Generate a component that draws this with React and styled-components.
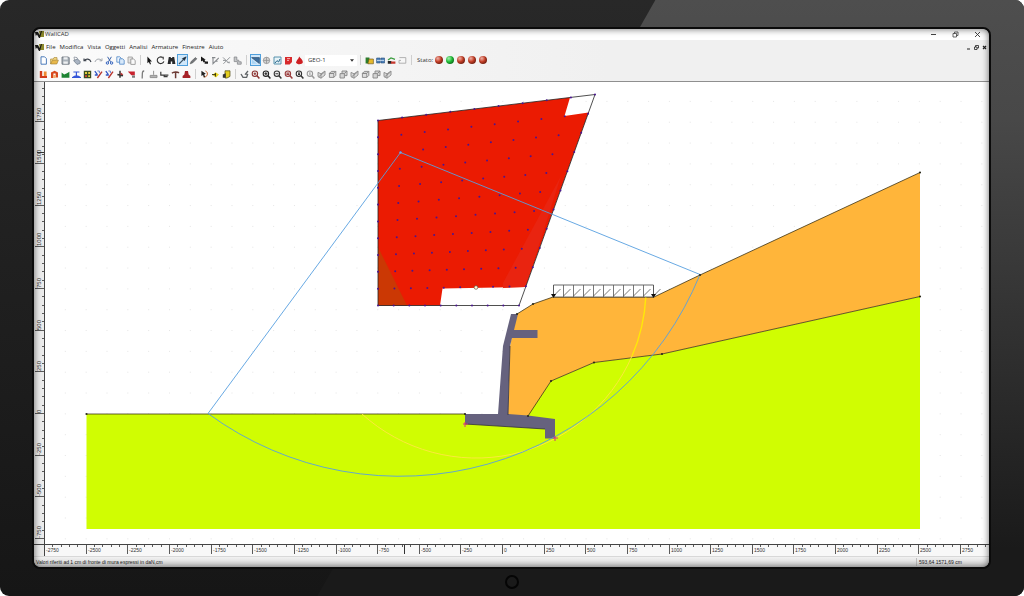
import React, { useState } from 'react';
import styled, { createGlobalStyle } from 'styled-components';

// pixels per cm of the sheet, and where the world origin falls on it
const SCALE_X = 0.1665;
const SCALE_Y = 0.1668;
const ORIGIN = { x: 458, y: 331 };

const icons = {
  page: <path d="M2 .8h3.6L7.4 2.6v5.6H2z" fill="#fff" stroke="#3c6fb4" strokeWidth=".9" />,
  open: (
    <>
      <path d="M.6 8V3h2.6l.8-1.4h3V4" fill="#f5d983" stroke="#a98a3e" strokeWidth=".7" />
      <path d="M.6 8l1.8-3.8h6L6.8 8z" fill="#e8b84a" stroke="#9a7a30" strokeWidth=".6" />
    </>
  ),
  save: (
    <>
      <path d="M1 1h6.4l.8.8v6.4H1z" fill="#aab2ba" stroke="#626a74" strokeWidth=".8" />
      <path d="M2.6 1.2h4v2.4h-4zM2.4 5.4h4.4v2.4H2.4z" fill="#eef0f2" />
    </>
  ),
  print: (
    <>
      <path d="M2 1l3 .6 1 2.6-3.4.2z" fill="#fff" stroke="#7f8894" strokeWidth=".7" />
      <path d="M1.6 4.6L5.4 3l3 2.6-.6 2L5 8.4z" fill="#a9b4c2" stroke="#6d7886" strokeWidth=".7" />
    </>
  ),
  undo: <path d="M1 2.4v2.4h2.4M1.2 4.6C3 2.4 7 2.4 8 6" fill="none" stroke="#3b414b" strokeWidth="1.1" />,
  redo: <path d="M8 2.4v2.4H5.6M7.8 4.6C6 2.4 2 2.4 1 6" fill="none" stroke="#a3a8ae" strokeWidth="1" />,
  cut: (
    <>
      <path d="M2.6.8l3 5M6.4.8l-3 5" stroke="#3a62a8" strokeWidth="1" />
      <path d="M1.2 7a1.2 1.2 0 102.4 0 1.2 1.2 0 10-2.4 0M5.4 7a1.2 1.2 0 102.4 0 1.2 1.2 0 10-2.4 0" fill="none" stroke="#2f5fbd" strokeWidth="1" />
    </>
  ),
  copy: (
    <>
      <path d="M.8.8h3l1.4 1.4v4H.8z" fill="#eef5fd" stroke="#4f86c6" strokeWidth=".8" />
      <path d="M3.6 2.8h3l1.6 1.4v4H3.6z" fill="#d8e9fa" stroke="#4f86c6" strokeWidth=".8" />
    </>
  ),
  paste: (
    <>
      <path d="M1 1h4.4v6H1z" fill="#e3e3e3" stroke="#9b9b9b" strokeWidth=".8" />
      <path d="M3.8 3h2.8l1.6 1.4v4H3.8z" fill="#fafafa" stroke="#8e8e8e" strokeWidth=".8" />
    </>
  ),
  cursor: <path d="M2.4.6v6.6l1.5-1.3L5 8.4l1-.5L5 5.5h2z" fill="#151515" />,
  rotate: <path d="M6.6 1.4A3.4 3.4 0 107.9 5.4M4.6 1.2h2.6v2.4" fill="none" stroke="#333" strokeWidth="1.1" />,
  binocular: <path d="M1.8 1h2v1h1.4V1h2l1.2 7H5.2V5.4H3.8V8H.6z" fill="#27282a" />,
  pick: (
    <>
      <path d="M1 8l4.6-4.6" stroke="#3d5366" strokeWidth="1.2" />
      <path d="M4.4 2.6L8.2.8 6.4 4.6z" fill="#1c2c3a" stroke="#1c2c3a" strokeWidth=".6" />
    </>
  ),
  brush: <path d="M1.2 7.8l1-2.4L6.4 1.6l1.4 1.2-4 4z" fill="#74777a" stroke="#4f5254" strokeWidth=".6" />,
  move: <path d="M1 .6v5l1.4-1 1.2 1.8 1-.6v2H8V5.4H5.4l-1-1.6h1.4z" fill="#1b1b1b" />,
  greyPen: <path d="M1 1.6h3.4M2 1.6v6L7.8 1.8M4.4 5.2h2.2" fill="none" stroke="#85888c" strokeWidth="1.1" />,
  greyCross: <path d="M1 1.4l6 6M1.4 7.8L8 1.2M1 4.4h3M5.4 6.4l2.6-.2" fill="none" stroke="#929599" strokeWidth="1" />,
  greyHand: <path d="M1.2 1h2.6v3.2h2v1.6h2.4v2.4H4.4V5.6H1.2z" fill="#c6c8ca" stroke="#85888c" strokeWidth=".8" />,
  wedge: (
    <>
      <path d="M.6 1.6h7.8v6z" fill="#3d6d9c" stroke="#203e5e" strokeWidth=".6" />
      <path d="M1 3.4l5 4.4H1z" fill="#a8d3f3" />
    </>
  ),
  globe: <path d="M4.5 1.2a3.2 3.2 0 100 6.4 3.2 3.2 0 100-6.4M1.4 4.4h6.2M4.5 1.2v6.4" fill="#d5d5d5" stroke="#929292" strokeWidth=".8" />,
  image: (
    <>
      <path d="M1 1h7v7H1z" fill="#e6f3f7" stroke="#4788a5" strokeWidth=".9" />
      <path d="M2 7l2-2.4L5.6 6 7 3" fill="none" stroke="#266488" strokeWidth="1" />
    </>
  ),
  shield: (
    <>
      <path d="M1 1h7v5L5.6 8.4H1z" fill="#d72a2c" />
      <path d="M3 2.6h3M3 4.4h2" stroke="#ffd6d2" strokeWidth=".8" />
    </>
  ),
  drop: <path d="M4.2.6C5 2 8.2 4 7.8 6.6 7 8.8 1.6 8.6 1 6.4 1.4 4.4 3.6 3 4.2.6z" fill="#ce1f23" />,
  layers: (
    <>
      <path d="M.6 1.4h3.8v6H.6z" fill="#2d7d2c" />
      <path d="M4 3h4.4v4.8H2.8z" fill="#e5b92c" stroke="#614c14" strokeWidth=".6" />
    </>
  ),
  book: (
    <>
      <path d="M.6 2h3.6v5H.6zM5 2h3.6v5H5z" fill="#4c7fb9" stroke="#28507e" strokeWidth=".6" />
      <path d="M1 4.4h7" stroke="#cfe3f5" strokeWidth=".9" />
    </>
  ),
  chart: (
    <>
      <path d="M.8 5h3.6v2.8H.8z" fill="#262626" />
      <path d="M4 5.4h4.4v2.4H4z" fill="#c6362d" />
      <path d="M1 4l3-2 4 1.4" fill="none" stroke="#3a9c3d" strokeWidth="1.2" />
    </>
  ),
  note: <path d="M1.4 1.6h6.4v5.6H1V4.4h2" fill="#f7f7f7" stroke="#a9a9a9" strokeWidth=".9" />,
  tower: (
    <>
      <path d="M.8 1h2.4v5H8V8H.8z" fill="#d23c1c" />
      <path d="M4.8 1.4h2.8V6H4.8z" fill="#ee8a33" />
    </>
  ),
  towerRound: (
    <>
      <path d="M1 2.4L4.6.8 8 2.6v5H5.6V3.6H3.4V8H1z" fill="#d8491e" />
      <path d="M3.4 5h2.2v3H3.4z" fill="#f2b06c" />
    </>
  ),
  hill: <path d="M.6 2.6l2.6 2L6 3.2l2.4-1.4v6H.6z" fill="#1d8433" />,
  bridge: <path d="M1.4 2h6M4.4 2v4M.6 7.4c2.4-1.8 5.4-1.8 7.8 0z" fill="#3556d8" stroke="#3556d8" strokeWidth="1.2" />,
  grid: (
    <>
      <path d="M.8.8h7.4v7.4H.8z" fill="#3b4d20" />
      <path d="M2 2h2v2H2zM5.2 2h1.8v2H5.2zM5.2 5.2h1.8v1.8H5.2z" fill="#e0ce3e" />
      <path d="M2 5.2h2v1.8H2z" fill="#d34635" />
    </>
  ),
  redBlue: (
    <>
      <path d="M.8 1.2l2.6 3.4M.8 5h3" stroke="#3154c4" strokeWidth="1.3" />
      <path d="M3.4 8L8 1.6" stroke="#b9362f" strokeWidth="1.4" />
      <path d="M3.4 1h2v2" fill="none" stroke="#5a77cc" strokeWidth=".9" />
    </>
  ),
  figure: (
    <>
      <path d="M4 .8v7M1.4 4.4L7 5.8" stroke="#353535" strokeWidth="1.5" />
      <path d="M4.4 2.2l3 2.2-2.6.8z" fill="#b32d2d" />
    </>
  ),
  flag: (
    <>
      <path d="M.8 1.4h7v3.8H4.4z" fill="#c8232f" />
      <path d="M5 5.6h3v2.2H5z" fill="#7b7b7b" />
    </>
  ),
  hook: <path d="M6.2 1C4 1 4.4 2.6 4.2 8.4" fill="none" stroke="#7c7c7c" strokeWidth="1.3" />,
  stamp: <path d="M4.6.8v4M1.2 5.4h6.8v2.2H1.2z" fill="#b4b4b4" stroke="#8a8a8a" strokeWidth=".9" />,
  bar: <path d="M.8 1.8v3.4h7.6M4.2 5v1.6h3.4" fill="none" stroke="#3a3a3a" strokeWidth="1.2" />,
  tee: <path d="M1 3.2C2.4 1.6 6.4 1.6 8 2.8M4.6 2.2v6" fill="none" stroke="#6d3b35" strokeWidth="1.5" />,
  bell: <path d="M3 1h3l.6 3.6L8.4 6v2H.6V6l1.8-1.4z" fill="#a52127" />,
  target: (
    <>
      <path d="M5.4 1a3 3 0 11-2 5.8" fill="none" stroke="#c5642e" strokeWidth="1" />
      <path d="M1.4.8l4.4 3-1.6.6 1 2.6-1.2.4-1-2.4L1.4 6z" fill="#222" />
    </>
  ),
  spark: (
    <>
      <path d="M4.4 2.2L8 4.6 5 7.4 1.6 5z" fill="#e9d723" />
      <path d="M1 4.6h4M4.4 3v3.6" stroke="#3b3910" strokeWidth="1" />
    </>
  ),
  lamp: (
    <>
      <path d="M3 .8h5v5.6L5 8H3z" fill="#e3cd1e" stroke="#4f4710" strokeWidth=".7" />
      <path d="M.8 4.6l3-1.4v4.6h-3z" fill="#343434" />
    </>
  ),
  sketch: <path d="M8 1L5 4.6M1 4l2 3.4h3.6l1-3-2.4-.6" fill="none" stroke="#5f6366" strokeWidth="1.3" />,
  cubeA: <path d="M1.4 3.4l2-2h4.4l-2 2zM1.4 3.4h4.4v4H1.4zM5.8 7.4l2-2v-4" fill="#dedede" stroke="#858585" strokeWidth=".9" />,
  cubeB: <path d="M1 2.4l3 1.4L8 1v4L4 8.2 1 6.6zM4 3.8v4.4M1.6 6.8L7.6 2" fill="#dcdcdc" stroke="#8b8b8b" strokeWidth=".9" />,
  cubeC: <path d="M3 1h5v4.6H5.4V8H1V3.6h2zM3 3.6h2.4v2M5.4 3.6L8 1" fill="#d4d4d4" stroke="#868686" strokeWidth=".9" />,
};

function lens(color, mark) {
  return (
    <>
      <circle cx="3.9" cy="3.7" r="2.7" fill="#f4f4f4" stroke={color} strokeWidth="1.1" />
      <path d="M6 5.8l2.4 2.6" stroke={color} strokeWidth="1.5" />
      <path d={mark} stroke={color} strokeWidth="1.1" />
    </>
  );
}
icons.zoomArea = lens('#8c3432', 'M2.6 3.7h2.6M3.9 2.4v2.6');
icons.zoomIn = lens('#242424', 'M2.4 3.7h3M3.9 2.2v3');
icons.zoomOut = lens('#353535', 'M2.4 3.7h3');
icons.zoomAll = lens('#9a3c3c', 'M2.4 3h3M2.4 4.4h3');
icons.zoomBack = lens('#333', 'M3 3h2M3 4.4h2');
icons.zoomGrey = lens('#999', 'M3.9 2.2v3');

const fileTools = [
  ['page', 'Nuovo'], ['open', 'Apri'], ['save', 'Salva'], ['print', 'Stampa'], ['undo', 'Annulla'],
  ['redo', 'Ripeti'], ['cut', 'Taglia'], ['copy', 'Copia'], ['paste', 'Incolla'],
];
const editTools = [
  ['cursor', 'Seleziona'], ['rotate', 'Ruota'], ['binocular', 'Trova'], ['pick', 'Preleva'], ['brush', 'Pennello'],
  ['move', 'Sposta'], ['greyPen', 'Modifica punto'], ['greyCross', 'Elimina punto'], ['greyHand', 'Trascina'],
];
const viewTools = [
  ['wedge', 'Cuneo'], ['globe', 'Globale'], ['image', 'Immagine'], ['shield', 'Verifica'], ['drop', 'Falda'],
];
const reportTools = [['layers', 'Strati'], ['book', 'Relazione'], ['chart', 'Diagramma'], ['note', 'Nota']];
const objectTools = [
  ['tower', 'Muro'], ['towerRound', 'Muro a gravità'], ['hill', 'Terreno'], ['bridge', 'Acqua'], ['grid', 'Materiali'],
  ['redBlue', 'Carico'], ['redBlue', 'Carico lineare'], ['figure', 'Forza'], ['flag', 'Sisma'], ['hook', 'Gancio'],
  ['stamp', 'Base'], ['bar', 'Barra'], ['tee', 'Tirante'], ['bell', 'Palo'],
];
const calcTools = [['target', 'Calcola'], ['spark', 'Combinazioni'], ['lamp', 'Opzioni']];
const zoomTools = [
  ['sketch', 'Disegno'], ['zoomArea', 'Zoom area'], ['zoomIn', 'Ingrandisci'], ['zoomOut', 'Riduci'],
  ['zoomAll', 'Zoom tutto'], ['zoomBack', 'Zoom precedente'], ['zoomGrey', 'Zoom fisso'], ['cubeB', 'Vista 1'],
  ['cubeA', 'Vista 2'], ['cubeC', 'Vista 3'], ['cubeB', 'Vista 4'], ['cubeA', 'Vista 5'], ['cubeC', 'Vista 6'],
  ['cubeB', 'Vista 7'],
];
const menus = ['File', 'Modifica', 'Vista', 'Oggetti', 'Analisi', 'Armature', 'Finestre', 'Aiuto'];
const lights = ['#cc3f26', '#22c83a', '#cc3f26', '#cc3f26', '#cc3f26'];

function AppIcon() {
  return (
    <svg width="9" height="9" viewBox="0 0 9 9" aria-hidden="true">
      <path d="M4 1h5v6H5z" fill="#8d8a2c" />
      <path d="M0 2h3l1.6 3L6 1h1L5 8H4L2 4.6.8 6z" fill="#1a1a18" />
    </svg>
  );
}

function Tools({ items, active }) {
  return items.map(([icon, label], i) => (
    <Tool key={i} type="button" title={label} aria-label={label} $on={icon === active}>
      <svg width="9" height="9" viewBox="0 0 9 9" fill="none">{icons[icon]}</svg>
    </Tool>
  ));
}

function range(from, to, step) {
  const out = [];
  for (let v = from; v <= to; v += step) out.push(v);
  return out;
}

function LeftRuler() {
  return (
    <RulerSvg $side="left">
      <path d="M10.5 0v2000" stroke="#444" />
      {range(-6000, 1950, 50).map(v => {
        const y = Math.round(ORIGIN.y - v * SCALE_Y) + 0.5;
        return <path key={v} d={`M${v % 250 ? 8 : 1} ${y}H10`} stroke="#5a5a5a" />;
      })}
      {range(-750, 1750, 250).map(v => (
        <text key={v} transform={`translate(7 ${Math.round(ORIGIN.y - v * SCALE_Y)}) rotate(-90)`}>{v}</text>
      ))}
      <path d="M3 70.5h7" stroke="#333" />
    </RulerSvg>
  );
}

function BottomRuler() {
  return (
    <RulerSvg>
      <path d="M0 .5h4000" stroke="#444" />
      {range(-2750, 15000, 50).map(v => {
        const x = Math.round(ORIGIN.x + v * SCALE_X) - 0.5;
        return <path key={v} d={`M${x} 1v${v % 250 ? 2 : 9}`} stroke="#5a5a5a" />;
      })}
      {range(-2750, 2750, 250).map(v => (
        <text key={v} x={Math.round(ORIGIN.x + v * SCALE_X) + 1} y="8">{v}</text>
      ))}
      <path d="M359.5 1v9" stroke="#333" />
    </RulerSvg>
  );
}

// nodes of the mesh of centres, 9 x 11 cells between the four corners
function meshNodes() {
  const nodes = [];
  for (let r = 0; r <= 11; r++) {
    for (let c = 0; c <= 9; c++) {
      const u = c / 9;
      const v = r / 11;
      const right = { x: 595 - 76 * v, y: 94.5 + 211 * v };
      const leftY = 120.5 + 185 * v;
      nodes.push([378 + (right.x - 378) * u, leftY + (right.y - leftY) * u]);
    }
  }
  return nodes;
}

const soilNodes = [
  [86.5, 414], [465, 414], [528, 416], [551, 381], [594, 362.5], [662, 354], [920, 296.5],
  [920, 172.5], [700, 275], [533, 304], [517, 314],
];

function Drawing() {
  return (
    <Sheet role="img" aria-label="Sezione del muro con superfici di scorrimento">
      <defs>
        <pattern id="dots" width="20.83" height="20.83" patternUnits="userSpaceOnUse" x="0" y="8">
          <path d="M20 11h1v1h-1z" fill="#e0e0e0" />
        </pattern>
      </defs>
      <rect width="100%" height="100%" fill="url(#dots)" />
      <g transform="translate(-45 -82)">
        <path d="M86.5 414H528l23-33 43-18.5 68-8.5 258-57.5V529H86.5z" fill="#d0fd02" />
        <path d="M517 314l16-10 20-7h101l46-22 220-102.5v124L662 354l-68 8.5L551 381l-23 35-20-1 2-69z" fill="#ffb53a" />
        <path d="M86.5 414H465M517 314l16-10 20-7h101l46-22 220-102.5M528 416l23-35 43-18.5 68-8.5 258-57.5" fill="none" stroke="#3d3518" strokeWidth=".8" />
        <path d="M511 314h7l-4 16h23.5v8H512l-2 8-2 68 20 1.5 27 3.5v19.5h-10V429l-80-5v-10h33l5-68z" fill="#66627e" />
        <path d="M465 424l80 5M510 346l-2 69" fill="none" stroke="#34313e" strokeWidth=".8" />

        {/* trial surfaces */}
        <path d="M645.8 297A170 170 0 01632 356" fill="none" stroke="#ffe808" strokeWidth="1.4" />
        <path d="M632 356A170 170 0 01362 414" fill="none" stroke="#fbe93c" strokeWidth="1" />

        <path d="M378 120.5L570 97.5l-5.5 18.5 24-3.5-63 174.5-83 1.5-2.5 17H378z" fill="#eb1b02" />
        <path d="M561 176l-58 107v5l22.5-1z" fill="#e92410" />
        <path d="M378 247l29 58.5h-29z" fill="#cb3804" />
        <path d="M378 120.5L595 94.5 519 305.5H378z" fill="none" stroke="#222" strokeWidth=".8" />
        {meshNodes().map(([x, y], i) => (
          <circle key={i} cx={x} cy={y} r="1" fill="#4a1590" />
        ))}
        <circle cx="476" cy="287.5" r="1.8" fill="#fff6d8" stroke="#6b5a40" strokeWidth=".7" />

        <path d="M700 274.5L400.5 152.5 208 413.5A324.3 324.3 0 00700 274.5" fill="none" stroke="#579fe0" strokeWidth=".9" />
        <circle cx="400.5" cy="152.5" r="1.2" fill="#7aa7dc" />

        {/* distributed load */}
        <path d="M553.5 285h100v12h-100z" fill="#fff" stroke="#444" strokeWidth=".8" />
        {range(0, 10, 1).map(i => (
          <path key={i} d={`M${553.5 + i * 10} 285v12m0 -1l7 -7`} fill="none" stroke="#555" strokeWidth=".8" />
        ))}
        <path d="M551 294h5l-2.5 4zM651 294h5l-2.5 4z" fill="#111" />

        {soilNodes.map(([x, y]) => (
          <circle key={`${x}-${y}`} cx={x} cy={y} r="1.1" fill="#2b2a1c" />
        ))}
        <path d="M463 424h5M465 422v5M553 438h5M555 436v5" stroke="#d2367e" />
      </g>
    </Sheet>
  );
}

function App() {
  const [combo, setCombo] = useState('GEO-1');

  return (
    <>
      <GlobalStyle />
      <Monitor>
        <Screen>
          <TitleBar>
            <AppIcon />
            <Title>WallCAD</Title>
            <WindowButtons>
              <WinButton type="button" aria-label="Riduci a icona">
                <svg width="7" height="7" viewBox="0 0 7 7"><path d="M1 3.5h5" stroke="#444" /></svg>
              </WinButton>
              <WinButton type="button" aria-label="Ripristina">
                <svg width="7" height="7" viewBox="0 0 7 7"><path d="M1 2.5h3.5V6H1zM2.5 2.5V1H6v3.5H4.5" fill="none" stroke="#444" strokeWidth=".8" /></svg>
              </WinButton>
              <WinButton type="button" aria-label="Chiudi">
                <svg width="7" height="7" viewBox="0 0 7 7"><path d="M1 1l5 5M6 1L1 6" stroke="#333" strokeWidth=".9" /></svg>
              </WinButton>
            </WindowButtons>
          </TitleBar>

          <MenuBar>
            <AppIcon />
            <Menus>
              {menus.map(m => <MenuItem key={m} type="button">{m}</MenuItem>)}
            </Menus>
            <ChildButtons>
              <ChildButton type="button" aria-label="Riduci finestra">
                <svg width="5" height="5" viewBox="0 0 5 5"><path d="M1 4h3" stroke="#222" /></svg>
              </ChildButton>
              <ChildButton type="button" aria-label="Ripristina finestra">
                <svg width="5" height="5" viewBox="0 0 5 5"><path d="M.5 2H3v2.5H.5zM1.5 2V.5h3V3H3" fill="none" stroke="#222" strokeWidth=".8" /></svg>
              </ChildButton>
              <ChildButton type="button" aria-label="Chiudi finestra">
                <svg width="5" height="5" viewBox="0 0 5 5"><path d="M1 1l3 3M4 1L1 4" stroke="#222" strokeWidth="1.2" /></svg>
              </ChildButton>
            </ChildButtons>
          </MenuBar>

          <Toolbar>
            <Tools items={fileTools} />
            <Divider />
            <Tools items={editTools} active="pick" />
            <Divider />
            <Tools items={viewTools} active="wedge" />
            <Combo>
              <select aria-label="Combinazione" value={combo} onChange={(e) => setCombo(e.target.value)}>
                <option>GEO-1</option>
                <option>GEO-2</option>
                <option>STR-1</option>
              </select>
              <svg width="4" height="3" viewBox="0 0 5 3"><path d="M0 0h5L2.5 3z" fill="#333" /></svg>
            </Combo>
            <Divider />
            <Tools items={reportTools} />
            <Divider />
            <State>Stato:</State>
            {lights.map((c, i) => (
              <Light key={i}><LightDot $color={c} /></Light>
            ))}
          </Toolbar>
          <Toolbar>
            <Tools items={objectTools} />
            <Divider />
            <Tools items={calcTools} />
            <Divider />
            <Tools items={zoomTools} />
          </Toolbar>

          <Workspace>
            <LeftRuler />
            <Drawing />
            <Corner />
            <BottomRuler />
          </Workspace>

          <StatusBar>
            <span>Valori riferiti ad 1 cm di fronte di mura espressi in daN,cm</span>
            <Coords>593,64 1571,69 cm</Coords>
          </StatusBar>
        </Screen>
        <Chin>
          <HomeButton type="button" aria-label="Home" />
        </Chin>
      </Monitor>
    </>
  );
}

export default App;


const GlobalStyle = createGlobalStyle`
  *{
    box-sizing: border-box;
  }
  body{
    margin: 0;
    background: #fff;
    font-family: "Open Sans", "Noto Sans", sans-serif;
    font-size: 6px;
    color: #333;
  }
  button, select{
    border: none;
    margin: 0;
    padding: 0;
    background: none;
    font: inherit;
    color: inherit;
  }
  svg{
    display: block;
    flex: none;
  }
`
const Monitor = styled.div`
  position: relative;
  isolation: isolate;
  display: flex;
  flex-direction: column;
  height: 100vh;
  padding: 29px 35px 0 34px;
  border-radius: 9px;
  overflow: hidden;
  background: linear-gradient(#282828, #161616);

  /* the reflection over the right part of the frame */
  &::before{
    content: "";
    position: absolute;
    z-index: -1;
    inset: 0;
    background: linear-gradient(#4e4e4e, #484848 20%, #1a1a1a 92%);
    clip-path: polygon(64% 0, 100% 0, 100% 100%, 31% 100%);
  }
`
const Screen = styled.div`
  position: relative;
  flex: 1;
  min-height: 0;
  display: flex;
  flex-direction: column;
  border-radius: 6px;
  overflow: hidden;
  background: #f0f0f0;
  outline: 2px solid #0b0b0b;

  &::after{
    content: "";
    position: absolute;
    inset: 0;
    border-radius: 6px;
    box-shadow: inset 0 0 7px rgba(0, 0, 0, 0.6);
    pointer-events: none;
  }
`
const TitleBar = styled.header`
  display: flex;
  align-items: center;
  height: 11px;
  padding: 0 8px 0 1px;
  background: #fff;
`
const Title = styled.span`
  margin-left: 1px;
  line-height: 9px;
`
const WindowButtons = styled.div`
  display: flex;
  gap: 15px;
  margin-left: auto;
`
const WinButton = styled.button`
  display: flex;
`
const MenuBar = styled.nav`
  display: flex;
  align-items: center;
  height: 13px;
  padding: 1px 2px 0 1px;
  background: linear-gradient(to right, #fbfbfb, #f0f0f0 60%);
`
const Menus = styled.div`
  display: flex;
  gap: 4px;
  padding-left: 2px;
`
const MenuItem = styled.button`
  line-height: 10px;
  color: #222;
`
const ChildButtons = styled.div`
  display: flex;
  gap: 3px;
  margin-left: auto;
`
const ChildButton = styled.button`
  display: flex;
`
const Toolbar = styled.div`
  display: flex;
  align-items: center;
  height: 14px;
  padding-left: 4px;
  background: linear-gradient(to right, #fbfbfb, #f0f0f0 60%);
`
const Tool = styled.button`
  display: flex;
  align-items: center;
  justify-content: center;
  width: 11px;
  height: 12px;
  border: 1px solid ${(p) => (p.$on ? '#4f9fdc' : 'transparent')};
  background: ${(p) => (p.$on ? '#cfe7fa' : 'none')};
`
const Divider = styled.span`
  width: 1px;
  height: 10px;
  margin: 0 3px;
  background: #cfcfcf;
`
const Combo = styled.div`
  display: flex;
  align-items: center;
  width: 52px;
  height: 11px;
  padding: 0 3px;
  background: #fff;

  select{
    flex: 1;
    appearance: none;
    outline: none;
    line-height: 9px;
  }
`
const State = styled.span`
  width: 18px;
  padding-left: 2px;
  line-height: 9px;
`
const Light = styled.span`
  display: flex;
  justify-content: center;
  width: 11px;
`
const LightDot = styled.i`
  width: 8px;
  height: 8px;
  border-radius: 50%;
  background: radial-gradient(circle at 35% 30%, #ffffff99, transparent 45%), ${(p) => p.$color};
  box-shadow: inset -1px -1px 2px rgba(0, 0, 0, 0.5);
`
const Workspace = styled.main`
  flex: 1;
  min-height: 0;
  display: grid;
  grid-template-columns: 11px 1fr;
  grid-template-rows: minmax(0, 1fr) 12px;
  border-top: 1px solid #8f8f8f;
  background: #fff;
`
const Sheet = styled.svg`
  width: 100%;
  height: 100%;
  overflow: hidden;
  background: #fff;
`
const RulerSvg = styled.svg`
  width: 100%;
  height: 100%;
  overflow: hidden;
  background: ${(p) => (p.$side === 'left' ? '#ececec' : '#f8f8f8')};

  text{
    font-family: "Liberation Sans", Arial, sans-serif;
    font-size: ${(p) => (p.$side === 'left' ? '6px' : '5px')};
    fill: #333;
  }
`
const Corner = styled.div`
  border-top: 1px solid #444;
  border-right: 1px solid #444;
  background: #ececec;
`
const StatusBar = styled.footer`
  display: flex;
  align-items: center;
  justify-content: space-between;
  height: 11px;
  padding-left: 2px;
  border-top: 1px solid #d8d8d8;
  background: linear-gradient(#f1f1f1, #d9d9d9);
  font-family: "Liberation Sans", Arial, sans-serif;
  font-size: 5px;
  line-height: 8px;
  color: #222;
`
const Coords = styled.span`
  width: 73px;
  padding-left: 2px;
  border-left: 1px solid #bdbdbd;
`
const Chin = styled.div`
  display: flex;
  align-items: center;
  justify-content: center;
  height: 29px;
`
const HomeButton = styled.button`
  width: 14px;
  height: 14px;
  border: 2px solid #050505;
  border-radius: 50%;
`
